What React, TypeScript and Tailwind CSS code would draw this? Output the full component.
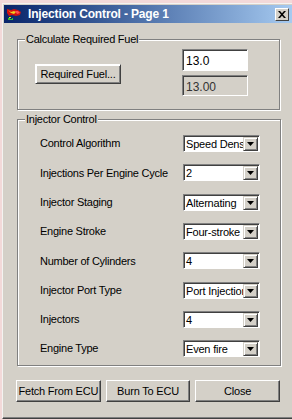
import type { ReactNode } from 'react';

const font = { fontFamily: '"Liberation Sans", Arial, sans-serif' };

const rows: { label: string; value: string }[] = [
  { label: 'Control Algorithm', value: 'Speed Density' },
  { label: 'Injections Per Engine Cycle', value: '2' },
  { label: 'Injector Staging', value: 'Alternating' },
  { label: 'Engine Stroke', value: 'Four-stroke' },
  { label: 'Number of Cylinders', value: '4' },
  { label: 'Injector Port Type', value: 'Port Injection' },
  { label: 'Injectors', value: '4' },
  { label: 'Engine Type', value: 'Even fire' },
];

function GroupBox({ title, className, children }: { title: string; className?: string; children: ReactNode }) {
  return (
    <fieldset className={`border border-[#808080] shadow-[1px_1px_0_#fff,inset_1px_1px_0_#fff] ${className ?? ''}`}>
      <legend className="ml-[7px] px-[1px] bg-[#d4d0c8] text-[11px] leading-[12px] tracking-[-0.25px] text-black">{title}</legend>
      {children}
    </fieldset>
  );
}

function Button({ label, className }: { label: string; className?: string }) {
  return (
    <button className={`flex items-center justify-center bg-[#d4d0c8] border border-t-white border-l-white border-b-[#404040] border-r-[#404040] shadow-[inset_-1px_-1px_0_#808080] text-[11px] tracking-[-0.2px] text-black ${className ?? ''}`}>
      {label}
    </button>
  );
}

function Combo({ value }: { value: string }) {
  return (
    <div className="flex w-[77px] h-[17px] bg-white border border-t-[#808080] border-l-[#808080] border-b-white border-r-white shadow-[inset_1px_1px_0_#404040]">
      <div className="flex-1 overflow-hidden whitespace-nowrap pl-[2px] pt-[1px] text-[11px] leading-[14px] tracking-[-0.2px] text-black">{value}</div>
      <div className="flex items-center justify-center w-[15px] h-[14px] mt-[1px] mr-[1px] bg-[#d4d0c8] border border-t-[#d4d0c8] border-l-[#d4d0c8] border-b-[#404040] border-r-[#404040] shadow-[inset_1px_1px_0_#fff,inset_-1px_-1px_0_#808080]">
        <svg width="7" height="4" viewBox="0 0 7 4"><path d="M0 0h7L3.5 4z" fill="#000" /></svg>
      </div>
    </div>
  );
}

function AppIcon() {
  return (
    <svg width="17" height="16" viewBox="0 0 17 16">
      <path d="M1 3l4 1 3-1 4 1 3 2-1 3-4 1-4-1-3 1-2-3z" fill="#d01010" />
      <path d="M2 4l3 2 3-1 2 1-2 2-3-1z" fill="#f0d020" />
      <path d="M9 5l3 0 2 2-3 1z" fill="#ff5050" />
      <path d="M2 12h2v1h2v-1h1v2h-5z" fill="#30c030" />
      <rect x="3" y="11" width="2" height="1" fill="#f0f000" />
    </svg>
  );
}

export default function App() {
  return (
    <div className="w-[292px] h-[420px] bg-[#f3d9d9] pt-[3px] pl-[2px] overflow-hidden" style={font}>
      <div className="flex flex-col h-[416px] bg-[#d4d0c8] border-t border-l border-t-[#f4f3f1] border-l-[#f4f3f1] border-b border-b-[#404040] shadow-[inset_0_-1px_0_#808080] pl-[1px] pt-[1px]">
        <div className="flex items-center h-[18px] pl-[2px] pr-[3px] bg-gradient-to-r from-[#0a246a] to-[#a6caf0]">
          <AppIcon />
          <span className="ml-[5px] text-[12px] font-bold tracking-[-0.15px] text-white whitespace-nowrap">Injection Control - Page 1</span>
          <div className="ml-auto flex items-center justify-center w-[14px] h-[13px] bg-[#d4d0c8] border border-t-white border-l-white border-b-[#404040] border-r-[#404040]">
            <svg width="8" height="7" viewBox="0 0 8 7"><path d="M0 0h2l2 2.3L6 0h2L5 3.5 8 7H6L4 4.7 2 7H0l3-3.5z" fill="#000" /></svg>
          </div>
        </div>

        <div className="flex flex-col pl-[13px] pr-[12px]">
          <GroupBox title="Calculate Required Fuel" className="mt-[10px] h-[77px]">
            <div className="flex items-start pt-[3px] pl-[17px] pr-[31px]">
              <Button label="Required Fuel..." className="mt-[16px] w-[86px] h-[20px] border-[#000] shadow-[inset_1px_1px_0_#fff,inset_-1px_-1px_0_#808080]" />
              <div className="ml-auto mt-[1px] flex flex-col gap-[4px]">
                <div className="w-[66px] h-[22px] bg-white border border-t-[#808080] border-l-[#808080] border-b-white border-r-white shadow-[inset_1px_1px_0_#404040] pl-[3px] pt-[2px] text-[12px] text-black">13.0</div>
                <div className="w-[66px] h-[21px] bg-[#d4d0c8] border border-t-[#808080] border-l-[#808080] border-b-white border-r-white shadow-[inset_1px_1px_0_#404040] pl-[3px] pt-[2px] text-[12px] text-[#333]">13.00</div>
              </div>
            </div>
          </GroupBox>

          <GroupBox title="Injector Control" className="mt-[3px] h-[253px] w-[264px]">
            <div className="flex flex-col pt-[4px]">
              {rows.map((r) => (
                <div key={r.label} className="flex items-center h-[29.3px] pl-[22px]">
                  <span className="w-[143px] overflow-hidden whitespace-nowrap text-[11px] tracking-[-0.25px] text-black">{r.label}</span>
                  <Combo value={r.value} />
                </div>
              ))}
            </div>
          </GroupBox>

          <div className="flex gap-[5px] mt-[14px] -ml-[1px]">
            <Button label="Fetch From ECU" className="w-[86px] h-[22px]" />
            <Button label="Burn To ECU" className="w-[86px] h-[22px]" />
            <Button label="Close" className="w-[86px] h-[22px]" />
          </div>
        </div>
      </div>
    </div>
  );
}
